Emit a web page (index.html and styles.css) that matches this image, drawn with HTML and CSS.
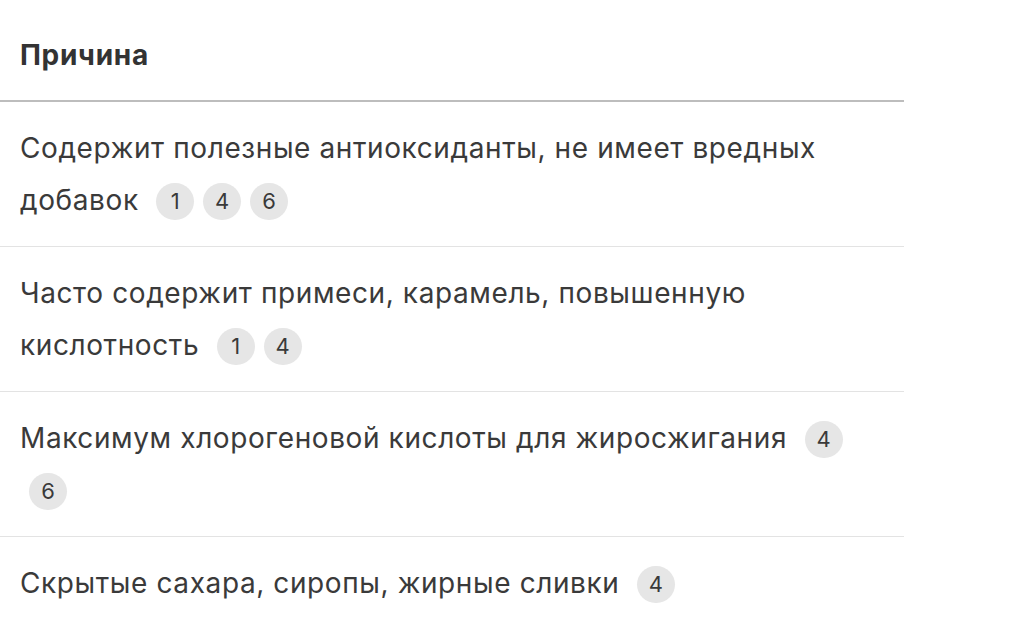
FILE: index.html
```html
<!DOCTYPE html>
<html lang="ru">
<head>
<meta charset="utf-8">
<link rel="stylesheet" href="styles.css">
</head>
<body>
<div class="table">
  <div class="head">Причина</div>
  <div class="row">Содержит полезные антиоксиданты, не имеет вредных добавок <span class="badge">1</span><span class="badge">4</span><span class="badge">6</span></div>
  <div class="row">Часто содержит примеси, карамель, повышенную кислотность <span class="badge">1</span><span class="badge">4</span></div>
  <div class="row">Максимум хлорогеновой кислоты для жиросжигания <span class="badge">4</span><span class="badge">6</span></div>
  <div class="row">Скрытые сахара, сиропы, жирные сливки <span class="badge">4</span></div>
</div>
</body>
</html>
```
FILE: styles.css
```css
html, body {
  margin: 0;
  padding: 0;
  background: #fff;
}
body {
  font-family: Inter, "Liberation Sans", Arial, sans-serif;
  color: #3a3a3a;
}
.table {
  width: 904px;
}
.head {
  font-weight: 700;
  font-size: 28px;
  letter-spacing: 0.7px;
  line-height: 52px;
  padding: 29px 20px 19px;
  color: #333;
  border-bottom: 2px solid #bdbdbd;
}
.row {
  font-size: 28px;
  letter-spacing: 0.6px;
  line-height: 52px;
  padding: 20px 20px 20px;
  border-bottom: 1px solid #e3e3e3;
}
.row:last-child {
  border-bottom: none;
}
.badge {
  display: inline-block;
  min-width: 38px;
  height: 37px;
  line-height: 37px;
  border-radius: 19px;
  background: #e6e6e6;
  text-align: center;
  font-size: 22px;
  letter-spacing: 0;
  margin-left: 9px;
  vertical-align: 1px;
  color: #3a3a3a;
}
```
